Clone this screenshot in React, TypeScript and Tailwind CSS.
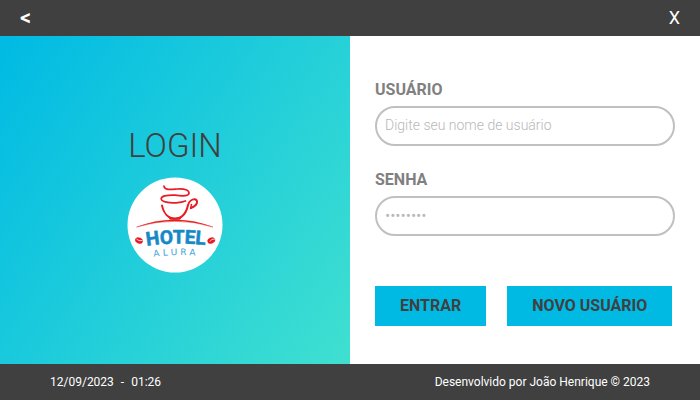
import React, { useState } from "react";

function HotelLogo() {
  return (
    <svg viewBox="0 0 110 110" className="h-[110px] w-[110px]" role="img" aria-label="Hotel Alura">
      <defs>
        <path id="hotel-arc" d="M27 76Q55 71 94 76" />
        <path id="alura-arc" d="M33 87Q56 83 92 87" />
      </defs>
      <circle cx="55" cy="55" r="47.5" fill="#fff" />
      <g fill="none" stroke="#e81c24" strokeLinecap="round" strokeLinejoin="round">
        <path d="M44 16.2C45 20.5 51 19.5 57 19C65 18.5 69 20 69 23C69 26 64 26.3 55 25.2C46 25 41.2 26 41.2 28.8C41.2 32 50 33.3 56 32.8C60 32.5 63 32 65.5 31" strokeWidth="1.7" />
        <path d="M42 35.5C43.5 43 48 48.5 55 48.5C62.5 48.5 66.5 42 68 35C69 31.500 72 29 75 29.3C79 30.500 77 36 71 38" strokeWidth="2" />
        <path d="M71.500 34.500L70.500 38.500" strokeWidth="1.4" />
      </g>
      <path d="M46 44Q55 52 64 44L60 49.8H50Z" fill="#e81c24" />
      <path d="M16.500 57Q55 42.500 93 57Q55 45.500 16.500 57Z" fill="#e81c24" stroke="#e81c24" strokeWidth=".4" />
      <g fill="#e81c24">
        <ellipse cx="19" cy="70.5" rx="4" ry="3" transform="rotate(25 19 70.5)" />
        <ellipse cx="91.3" cy="70.5" rx="4" ry="3" transform="rotate(-25 91.3 70.5)" />
      </g>
      <path d="M16.500 69Q18.500 71.500 22.500 70.500M95 69Q91 68.500 90 71.500" fill="none" stroke="#fff" strokeWidth=".8" />
      <text className="font-['Roboto',sans-serif] text-[19px] font-bold" fill="#1589c8" stroke="#1589c8" strokeWidth=".6">
        <textPath href="#hotel-arc">HOTEL</textPath>
      </text>
      <text className="font-['DejaVu_Sans',sans-serif] text-[9px]" fill="#45a3d5">
        <textPath href="#alura-arc" startOffset="1">A L U R A</textPath>
      </text>
    </svg>
  );
}

type FieldProps = {
  id: string;
  label: string;
  type: string;
  placeholder: string;
  inputClass: string;
};

function Field({ id, label, type, placeholder, inputClass }: FieldProps) {
  const [value, setValue] = useState("");
  return (
    <div className="flex flex-col">
      <label htmlFor={id} className="mb-1 text-base leading-6 font-bold text-[#808080]">
        {label}
      </label>
      <input
        id={id}
        type={type}
        value={value}
        onChange={(e) => setValue(e.target.value)}
        placeholder={placeholder}
        className={`h-10 w-full rounded-[20px] border-2 border-[#c0c0c0] bg-white px-2 pb-0.5 font-light text-gray-700 outline-none placeholder:text-[#b8b8b8] ${inputClass}`}
      />
    </div>
  );
}

export default function App() {
  return (
    <div className="flex min-h-screen flex-col bg-white font-['Roboto',sans-serif]">
      <header className="flex h-9 items-center justify-between bg-[#404040] px-5 text-lg text-white">
        <button type="button" aria-label="Voltar" className="text-[22px] font-medium">&lt;</button>
        <button type="button" aria-label="Fechar">X</button>
      </header>

      <main className="grid flex-1 grid-cols-2">
        <section className="flex flex-col items-center bg-[linear-gradient(125deg,#00bae4,#40e0d0)] pt-[86px]">
          <h1 className="text-[33px] leading-[48px] font-light text-[#404040]">LOGIN</h1>
          <HotelLogo />
        </section>

        <form className="flex flex-col px-[25px] pt-[42px]" onSubmit={(e) => e.preventDefault()}>
          <div className="flex flex-col gap-[22px]">
            <Field id="usuario" label="USUÁRIO" type="text" placeholder="Digite seu nome de usuário" inputClass="text-sm" />
            <Field id="senha" label="SENHA" type="password" placeholder="••••••••" inputClass="text-base" />
          </div>
          <div className="mt-[50px] flex gap-[21px] text-base font-bold text-[#404040]">
            <button type="submit" className="h-10 bg-[#00bae4] px-[25px]">ENTRAR</button>
            <button type="button" className="h-10 bg-[#00bae4] px-[25px] whitespace-nowrap">NOVO USUÁRIO</button>
          </div>
        </form>
      </main>

      <footer className="flex h-9 items-center justify-between bg-[#404040] px-[50px] text-xs text-white">
        <p className="flex gap-[7px]">
          <span>12/09/2023</span>
          <span>-</span>
          <span>01:26</span>
        </p>
        <p>Desenvolvido por João Henrique © 2023</p>
      </footer>
    </div>
  );
}
